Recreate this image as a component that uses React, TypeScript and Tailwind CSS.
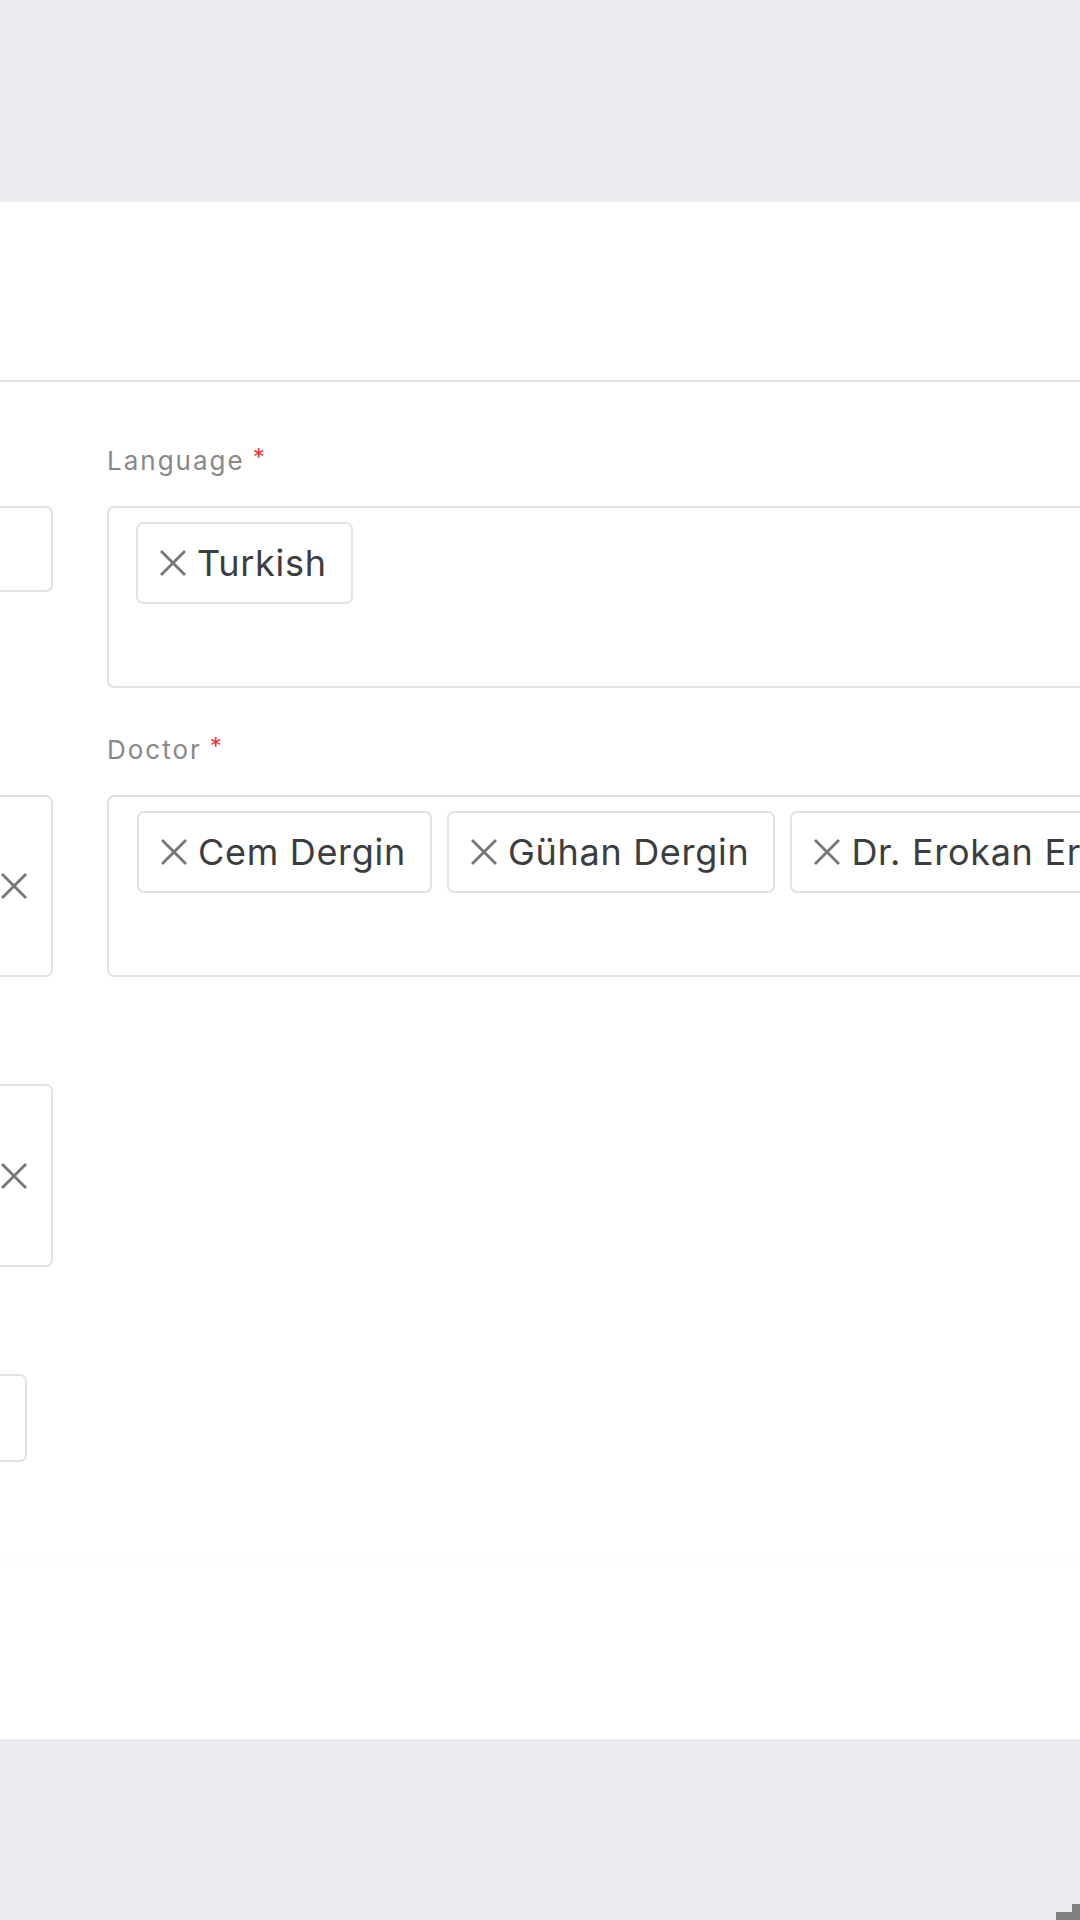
import React from "react";

function XIcon({ className = "" }: { className?: string }) {
  return (
    <svg viewBox="0 0 28 28" className={className} fill="none" stroke="#767676" strokeWidth={2.8} strokeLinecap="butt">
      <line x1="2" y1="2" x2="26" y2="26" />
      <line x1="26" y1="2" x2="2" y2="26" />
    </svg>
  );
}

function Chip({ label }: { label: string }) {
  return (
    <div className="shrink-0 h-[82px] flex items-center pl-[21px] pr-[24px] border-2 border-[#e2e3e5] rounded-[7px] bg-white">
      <XIcon className="w-[28px] h-[28px]" />
      <span className="ml-[10px] text-[36px] leading-none tracking-[0.7px] text-[#3b3d40] whitespace-nowrap">{label}</span>
    </div>
  );
}

function Label({ text }: { text: string }) {
  return (
    <div className="h-[36px] mb-[27px] flex items-center text-[26px] leading-[36px] tracking-[2px] text-[#888888] whitespace-nowrap">
      {text}
      <span className="ml-[8px] text-[#e53935] text-[24px] -mt-[6px]">*</span>
    </div>
  );
}

function LeftField({ h, w = "w-[53px]", clear = false }: { h: string; w?: string; clear?: boolean }) {
  return (
    <div className="flex flex-col">
      <div className="h-[36px] mb-[27px]" />
      <div className={`${h} ${w} border-2 border-l-0 border-[#e2e3e5] rounded-r-[7px] flex items-center justify-end pr-[23px]`}>
        {clear ? <XIcon className="w-[28px] h-[28px] shrink-0" /> : null}
      </div>
    </div>
  );
}

export default function App() {
  return (
    <div
      className="relative w-[1080px] h-[1920px] bg-[#ebecf0] flex flex-col overflow-hidden"
      style={{ fontFamily: "Inter, 'Noto Sans', sans-serif" }}
    >
      <div className="h-[202px] shrink-0" />
      <div className="h-[1537px] shrink-0 bg-white flex flex-col">
        <div className="h-[180px] shrink-0 border-b-2 border-[#e2e3e5]" />
        <div className="h-[1171px] shrink-0 bg-white shadow-[0_8px_12px_rgba(0,0,0,0.012)] pt-[61px] overflow-hidden">
          <div className="grid grid-cols-[53px_1000px] gap-x-[54px] gap-y-[44px] items-start">
            <LeftField h="h-[86px]" />
            <div className="flex flex-col">
              <Label text="Language" />
              <div className="h-[182px] border-2 border-r-0 border-[#e2e3e5] rounded-l-[7px] pt-[14px] pl-[27px] flex gap-[15px]">
                <Chip label="Turkish" />
              </div>
            </div>

            <LeftField h="h-[182px]" clear />
            <div className="flex flex-col">
              <Label text="Doctor" />
              <div className="h-[182px] border-2 border-r-0 border-[#e2e3e5] rounded-l-[7px] pt-[14px] pl-[28px] flex gap-[15px] overflow-hidden">
                <Chip label="Cem Dergin" />
                <Chip label="Gühan Dergin" />
                <Chip label="Dr. Erokan Erdem" />
              </div>
            </div>

            <LeftField h="h-[183px]" clear />
            <div />

            <LeftField h="h-[88px]" w="w-[27px]" />
            <div />
          </div>
        </div>
      </div>
      <div className="h-[181px] shrink-0" />

      <div className="absolute right-0 bottom-[8px] w-[8px] h-[8px] bg-[#7f7f7f]" />
      <div className="absolute right-0 bottom-0 w-[24px] h-[8px] bg-[#7f7f7f]" />
    </div>
  );
}
